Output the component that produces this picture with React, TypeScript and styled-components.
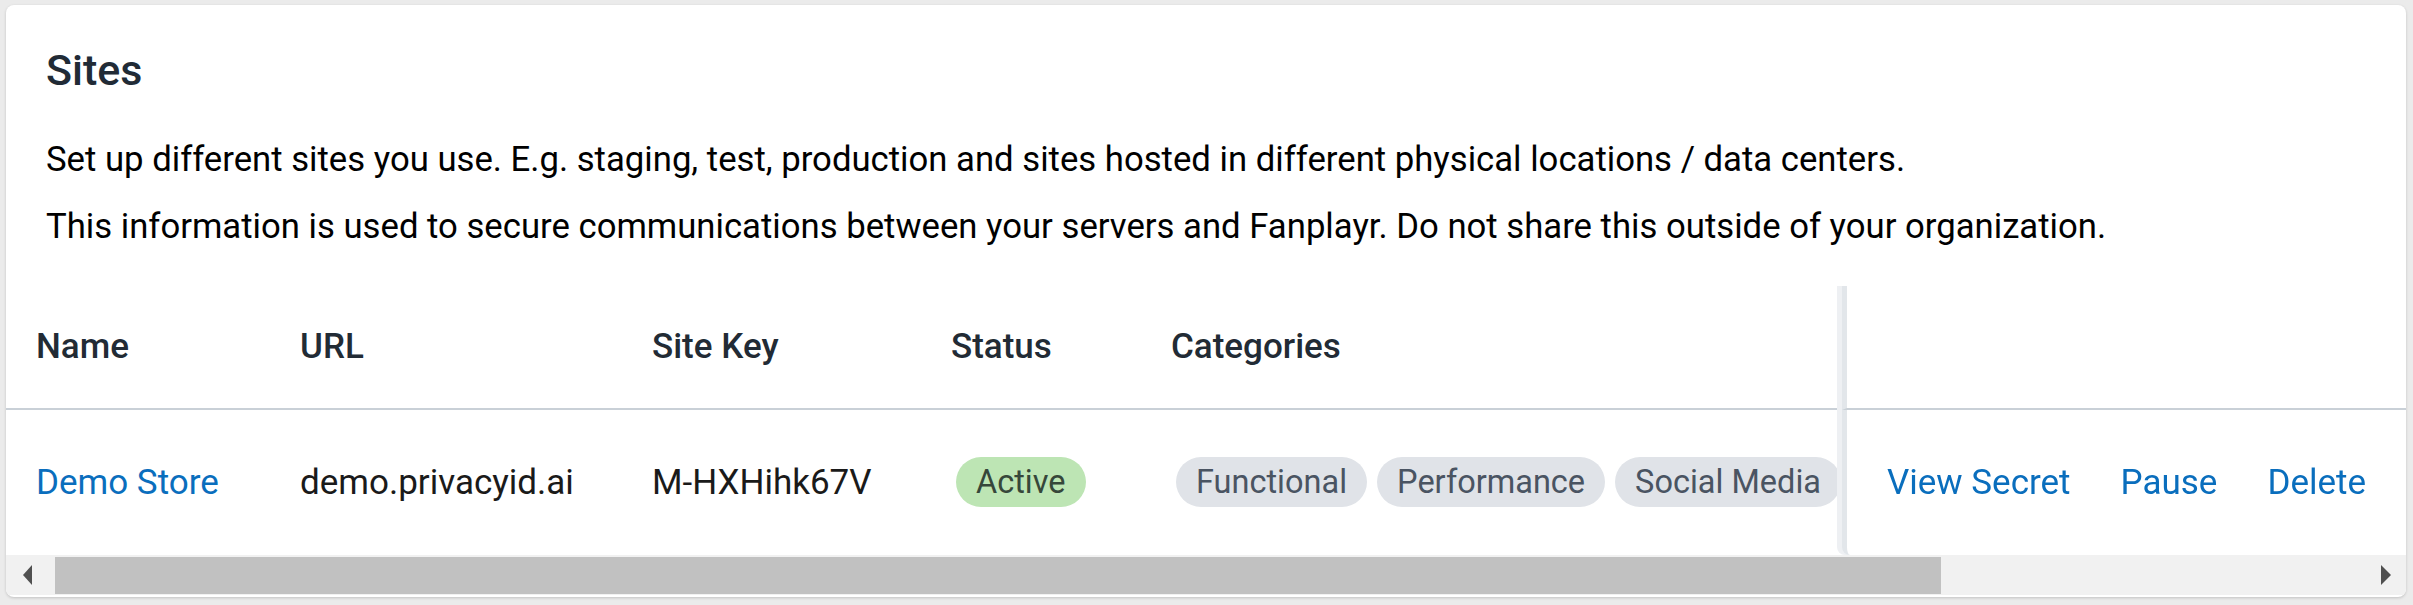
import React from "react";
import styled, { createGlobalStyle } from "styled-components";

const GlobalStyle = createGlobalStyle`
  *, *::before, *::after {
    box-sizing: border-box;
  }

  html,
  body {
    margin: 0;
    padding: 0;
    background: #ebebeb;
  }

  body {
    font-family: Roboto, "Liberation Sans", Arial, sans-serif;
  }
`;

const Page = styled.div`
  padding: 5px 7px 8px 6px;
`;

const Card = styled.div`
  background: #fff;
  border-radius: 8px;
  box-shadow: 0 1px 3px rgba(0, 0, 0, 0.18);
  overflow: hidden;
  padding-bottom: 2px;
`;

const Intro = styled.div`
  padding: 40px 40px 36px;
`;

const Title = styled.h2`
  margin: 0 0 38px;
  font-size: 43px;
  font-weight: 500;
  line-height: 1.2;
  color: #212b36;
`;

const Paragraph = styled.p`
  margin: 0 0 19px;
  font-size: 34.7px;
  line-height: 48px;
  color: #000;

  &:last-child {
    margin-bottom: 0;
  }
`;

const TableViewport = styled.div`
  overflow: hidden;
`;

const Table = styled.table<{ $width: number }>`
  width: ${(p) => p.$width}px;
  table-layout: fixed;
  border-collapse: separate;
  border-spacing: 0;
`;

const Col = styled.col<{ $w: number }>`
  width: ${(p) => p.$w}px;
`;

const HeadCell = styled.th`
  height: 124px;
  padding: 0 30px;
  text-align: left;
  vertical-align: middle;
  font-size: 35px;
  font-weight: 500;
  color: #222b35;
  border-bottom: 2px solid #c9d0d7;
  white-space: nowrap;
`;

const Cell = styled.td`
  height: 145px;
  padding: 0 30px;
  vertical-align: middle;
  font-size: 35px;
  color: #1a1a1a;
  white-space: nowrap;
`;

const StickyHead = styled(HeadCell)`
  position: sticky;
  right: 0;
  background: #fff;
  border-left: 5px solid #e2e6ea;
  box-shadow: -5px 0 0 #eef0f3;
`;

const ActionCell = styled(Cell)`
  position: sticky;
  right: 0;
  padding-left: 40px;
  background: #fff;
  border-left: 5px solid #e2e6ea;
  border-bottom-left-radius: 8px;
  box-shadow: -5px 0 0 #eef0f3;
`;

const Link = styled.a`
  color: #0a6ebd;
  text-decoration: none;
  cursor: pointer;
`;

const Actions = styled.div`
  display: flex;
  gap: 50px;
`;

const ChipRow = styled.div`
  display: flex;
  gap: 10px;
  padding-left: 5px;
`;

const Chip = styled.span<{ $tone?: "green" | "gray" }>`
  display: inline-flex;
  align-items: center;
  height: 50px;
  padding: 0 20px;
  border-radius: 25px;
  font-size: 32.5px;
  background: ${(p) => (p.$tone === "green" ? "#bde5b4" : "#e0e3e8")};
  color: ${(p) => (p.$tone === "green" ? "#36473a" : "#4a5462")};
`;

const ScrollBar = styled.div`
  display: flex;
  height: 40px;
  background: #f1f1f1;
`;

const ScrollButton = styled.div<{ $dir: "left" | "right" }>`
  width: 49px;
  display: flex;
  align-items: center;
  justify-content: ${(p) => (p.$dir === "left" ? "flex-start" : "flex-end")};
  padding-left: ${(p) => (p.$dir === "left" ? "17px" : "0")};
  padding-right: ${(p) => (p.$dir === "right" ? "15px" : "0")};

  &::before {
    content: "";
    border-top: 10px solid transparent;
    border-bottom: 10px solid transparent;
    ${(p) =>
      p.$dir === "left"
        ? "border-right: 9px solid #505050;"
        : "border-left: 10px solid #505050;"}
  }
`;

const ScrollTrack = styled.div`
  flex: 1;
  display: flex;
  padding: 2px 0 1px;
`;

const ScrollThumb = styled.div`
  height: 100%;
  background: #c1c1c1;
`;

const VIEWPORT = 2400;
const CONTENT = 2929;

const columns = [
  { key: "name", label: "Name", w: 264 },
  { key: "url", label: "URL", w: 352 },
  { key: "siteKey", label: "Site Key", w: 299 },
  { key: "status", label: "Status", w: 220 },
  { key: "categories", label: "Categories", w: 1230 },
];

const sites = [
  {
    id: 1,
    name: "Demo Store",
    url: "demo.privacyid.ai",
    siteKey: "M-HXHihk67V",
    status: "Active",
    categories: ["Functional", "Performance", "Social Media"],
  },
];

const App: React.FC = () => {
  const thumb = (VIEWPORT / CONTENT) * 100;

  return (
    <Page>
      <GlobalStyle />
      <Card>
        <Intro>
          <Title>Sites</Title>
          <Paragraph>
            Set up different sites you use. E.g. staging, test, production and
            sites hosted in different physical locations / data centers.
          </Paragraph>
          <Paragraph>
            This information is used to secure communications between your
            servers and Fanplayr. Do not share this outside of your
            organization.
          </Paragraph>
        </Intro>

        <TableViewport>
          <Table $width={CONTENT}>
            <colgroup>
              {columns.map((c) => (
                <Col key={c.key} $w={c.w} />
              ))}
              <Col $w={564} />
            </colgroup>
            <thead>
              <tr>
                {columns.map((c) => (
                  <HeadCell key={c.key}>{c.label}</HeadCell>
                ))}
                <StickyHead />
              </tr>
            </thead>
            <tbody>
              {sites.map((site) => (
                <tr key={site.id}>
                  <Cell>
                    <Link>{site.name}</Link>
                  </Cell>
                  <Cell>{site.url}</Cell>
                  <Cell>{site.siteKey}</Cell>
                  <Cell>
                    <ChipRow>
                      <Chip $tone="green">{site.status}</Chip>
                    </ChipRow>
                  </Cell>
                  <Cell>
                    <ChipRow>
                      {site.categories.map((cat) => (
                        <Chip key={cat}>{cat}</Chip>
                      ))}
                    </ChipRow>
                  </Cell>
                  <ActionCell>
                    <Actions>
                      <Link>View Secret</Link>
                      <Link>Pause</Link>
                      <Link>Delete</Link>
                    </Actions>
                  </ActionCell>
                </tr>
              ))}
            </tbody>
          </Table>
        </TableViewport>

        <ScrollBar>
          <ScrollButton $dir="left" />
          <ScrollTrack>
            <ScrollThumb style={{ width: `${thumb}%` }} />
          </ScrollTrack>
          <ScrollButton $dir="right" />
        </ScrollBar>
      </Card>
    </Page>
  );
};

export default App;
